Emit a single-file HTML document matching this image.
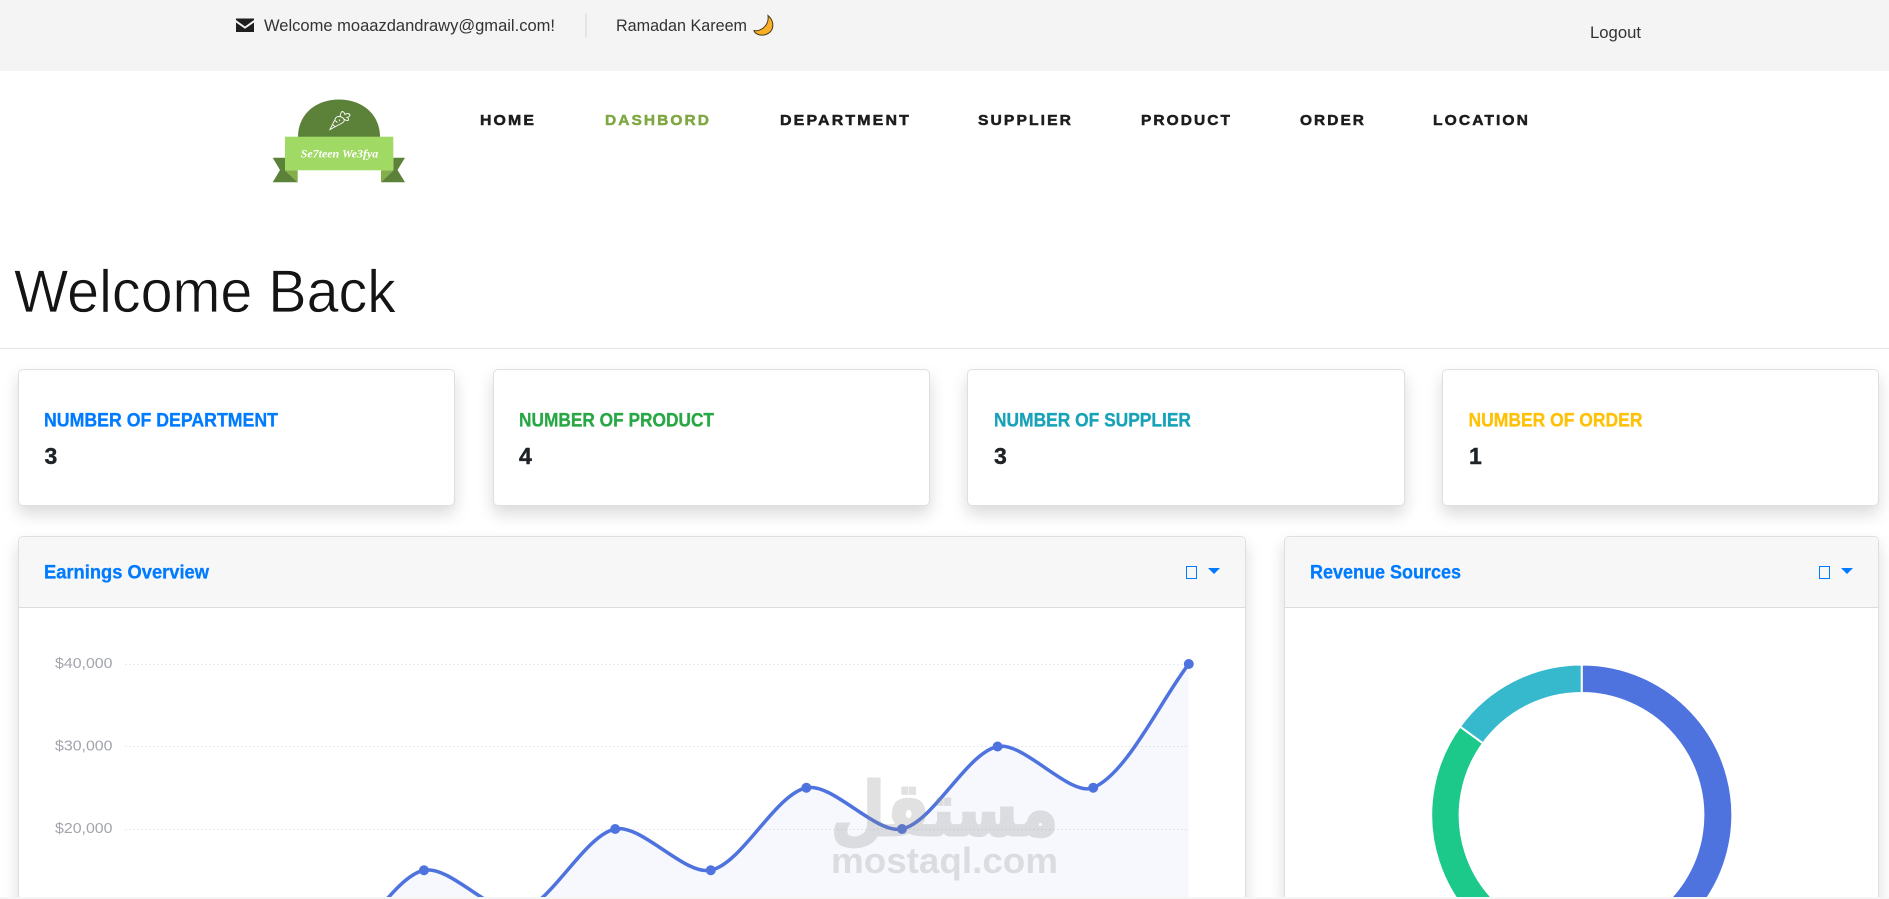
<!DOCTYPE html>
<html lang="en"><head><meta charset="utf-8"><title>Dashboard</title>
<style>
html,body{margin:0;padding:0;background:#fff;width:1889px;height:899px;overflow:hidden}
#w{position:relative;width:1889px;height:899px;overflow:hidden;font-family:"Liberation Sans",sans-serif;background:#fff}
.top{position:absolute;left:0;top:0;width:1889px;height:71px;background:#f4f4f4}
.hr{position:absolute;left:0;top:348px;width:1889px;height:1px;background:#e6e6e6}
.c{position:absolute;box-sizing:border-box;background:#fff;border:1px solid #dfdfdf;border-radius:5px;box-shadow:0 8px 16px rgba(0,0,0,.15)}
.s{top:369px;height:137px;width:437px}
.p{top:536px;height:363px;border-bottom:0;border-radius:5px 5px 0 0}
.h{position:absolute;left:0;right:0;top:0;height:71px;background:#f7f7f7;border-bottom:1px solid #dcdcdc;border-radius:4px 4px 0 0;box-sizing:border-box}
.b{position:absolute;left:0;top:897px;width:1889px;height:2px;background:#f5f5f5;z-index:3}
svg{position:absolute;left:0;top:0;z-index:2}
text{font-family:"Liberation Sans",sans-serif}
.n{font-size:15px;font-weight:700;fill:#1c1c1c;stroke:#1c1c1c;stroke-width:.5px;letter-spacing:2px}
.t{font-size:19px;font-weight:700;stroke-width:.3px}
.v{font-size:23px;font-weight:700;fill:#1f2226;stroke:#1f2226;stroke-width:.4px}
.l{font-size:14.5px;fill:#a3a5ad}
</style></head><body>
<div id="w">
<div class="top"></div>
<div class="hr"></div>
<div class="c s" style="left:18px"></div>
<div class="c s" style="left:493px"></div>
<div class="c s" style="width:438px;left:967px"></div>
<div class="c s" style="left:1442px"></div>
<div class="c p" style="left:18px;width:1228px"><div class="h"></div></div>
<div class="c p" style="left:1284px;width:595px"><div class="h"></div></div>
<div class="b"></div>
<svg width="1889" height="899" viewBox="0 0 1889 899">
<defs><clipPath id="k"><rect x="0" y="0" width="1889" height="897"/></clipPath></defs>
<!-- top bar -->
<path d="M236 18.500h18v1.500l-9 6.500-9-6.500z" fill="#1f1f1f"/>
<path d="M236 22.500l9 6.300 9-6.300v9.500h-18z" fill="#1f1f1f"/>
<text x="264" y="31" font-size="17" fill="#333" textLength="291" lengthAdjust="spacingAndGlyphs">Welcome moaazdandrawy@gmail.com!</text>
<rect x="585.500" y="13" width="1" height="25" fill="#d6d6d6"/>
<text x="616" y="31" font-size="17" fill="#333" textLength="131" lengthAdjust="spacingAndGlyphs">Ramadan Kareem</text>
<path d="M768 15.500C774.500 21 775 31 766 34.500C760 36.500 754.500 33.500 754 30.500C760 32 769.500 26 768 15.500Z" fill="#f9b027" stroke="#4a3a1c" stroke-width="1"/>
<text x="1590" y="38" font-size="17" fill="#333" textLength="51" lengthAdjust="spacingAndGlyphs">Logout</text>
<!-- logo -->
<path d="M298 137C298 114 316 99.500 339 99.500C362 99.500 380 114 380 137Z" fill="#5c8139"/>
<path d="M272.700 157.700H285V170.300L297.700 182.300H272.700L280 170Z" fill="#5c8139"/>
<path d="M405 157.700H393.300V170.300L381 182.300H405L397.500 170Z" fill="#5c8139"/>
<path d="M285 170.300L297.700 182.300V170.300Z" fill="#83ae48"/>
<path d="M393.300 170.300L381 182.300V170.300Z" fill="#83ae48"/>
<rect x="285" y="136.700" width="108.300" height="33.600" fill="#a0d964"/>
<text x="300.700" y="157.300" font-size="12" font-style="italic" font-weight="700" fill="#fff" textLength="77.600" lengthAdjust="spacingAndGlyphs" style="font-family:'Liberation Serif',serif">Se7teen We3fya</text>
<g fill="none" stroke="#fff" stroke-width=".9">
<path d="M330 129.500L336 117.500Q339 115 343 118Q345.500 120.500 343 122.500Z"/>
<path d="M340 116.500C340.500 114 341 112 342 111.500C343.500 111.500 344.500 113 345 114.500C347 113 349.500 113.500 350 115C350 116.500 348.500 117 347 117.500C348.500 118 349 119.500 348 120.500C346.500 120.800 345 120 344 119"/>
<path d="M335 120.500l2.500 2M333 125l2 1.500M339 119.500l1 1.500"/>
</g>
<!-- nav -->
<text class="n" x="480" y="125" textLength="56" lengthAdjust="spacingAndGlyphs">HOME</text>
<text class="n" x="605" y="125" textLength="106" lengthAdjust="spacingAndGlyphs" style="fill:#7fa843;stroke:#7fa843">DASHBORD</text>
<text class="n" x="780" y="125" textLength="131" lengthAdjust="spacingAndGlyphs">DEPARTMENT</text>
<text class="n" x="978" y="125" textLength="95" lengthAdjust="spacingAndGlyphs">SUPPLIER</text>
<text class="n" x="1141" y="125" textLength="91" lengthAdjust="spacingAndGlyphs">PRODUCT</text>
<text class="n" x="1300" y="125" textLength="66" lengthAdjust="spacingAndGlyphs">ORDER</text>
<text class="n" x="1433" y="125" textLength="97" lengthAdjust="spacingAndGlyphs">LOCATION</text>
<!-- heading -->
<text x="14" y="312" font-size="60" fill="#141414" stroke="#fff" stroke-width=".7" textLength="382" lengthAdjust="spacingAndGlyphs">Welcome Back</text>
<!-- stat cards -->
<text class="t" x="44" y="426.500" fill="#007bff" stroke="#007bff" textLength="234" lengthAdjust="spacingAndGlyphs">NUMBER OF DEPARTMENT</text>
<text class="v" x="44.500" y="464">3</text>
<text class="t" x="519" y="426.500" fill="#28a745" stroke="#28a745" textLength="195" lengthAdjust="spacingAndGlyphs">NUMBER OF PRODUCT</text>
<text class="v" x="519" y="464">4</text>
<text class="t" x="994" y="426.500" fill="#17a2b8" stroke="#17a2b8" textLength="197" lengthAdjust="spacingAndGlyphs">NUMBER OF SUPPLIER</text>
<text class="v" x="994" y="464">3</text>
<text class="t" x="1468.500" y="426.500" fill="#ffc107" stroke="#ffc107" textLength="174" lengthAdjust="spacingAndGlyphs">NUMBER OF ORDER</text>
<text class="v" x="1469" y="464">1</text>
<!-- panel headers -->
<text class="t" x="44" y="578.500" fill="#007bff" stroke="#007bff" textLength="165" lengthAdjust="spacingAndGlyphs">Earnings Overview</text>
<text class="t" x="1310" y="578.500" fill="#007bff" stroke="#007bff" textLength="151" lengthAdjust="spacingAndGlyphs">Revenue Sources</text>
<rect x="1186.500" y="566.500" width="10" height="12" fill="none" stroke="#007bff" stroke-width="1"/>
<path d="M1208 568H1220L1214 574Z" fill="#007bff"/>
<rect x="1819.500" y="566.500" width="10" height="12" fill="none" stroke="#007bff" stroke-width="1"/>
<path d="M1841 568H1853L1847 574Z" fill="#007bff"/>
<!-- chart grid -->
<g stroke="#e9eaf0" stroke-width="1" stroke-dasharray="2 2">
<path d="M125 664.500H1189M125 746.500H1189M125 829.500H1189"/>
</g>
<text class="l" x="55" y="668" textLength="57.500" lengthAdjust="spacingAndGlyphs">$40,000</text>
<text class="l" x="55" y="750.500" textLength="57.500" lengthAdjust="spacingAndGlyphs">$30,000</text>
<text class="l" x="55" y="833" textLength="57.500" lengthAdjust="spacingAndGlyphs">$20,000</text>
<g clip-path="url(#k)">
<!-- area and line -->
<path d="M328.400 952.750C359.830 945.970 392.570 877.030 424 870.250C449.930 864.660 493.670 917.090 519.600 911.500C551.030 904.720 583.770 835.780 615.200 829C641.130 823.410 684.870 875.840 710.800 870.250C742.230 863.470 774.970 794.530 806.400 787.750C832.330 782.160 876.070 834.590 902 829C933.430 822.220 966.170 753.280 997.600 746.500C1023.530 740.910 1070.280 797.640 1093.200 787.750C1127.640 772.890 1160.100 701.100 1188.800 664V960H328.400Z" fill="#4e73df" fill-opacity=".05"/>
<path d="M328.400 952.750C359.830 945.970 392.570 877.030 424 870.250C449.930 864.660 493.670 917.090 519.600 911.500C551.030 904.720 583.770 835.780 615.200 829C641.130 823.410 684.870 875.840 710.800 870.250C742.230 863.470 774.970 794.530 806.400 787.750C832.330 782.160 876.070 834.590 902 829C933.430 822.220 966.170 753.280 997.600 746.500C1023.530 740.910 1070.280 797.640 1093.200 787.750C1127.640 772.890 1160.100 701.100 1188.800 664" fill="none" stroke="#4e73df" stroke-width="3.500"/>
<!-- donut -->
<g stroke="#fff" stroke-width="2">
<path d="M1581.700 664.500A150.500 150.500 0 1 1 1535.200 958.100L1544 931.130A122 122 0 1 0 1581.700 693Z" fill="#4e73df"/>
<path d="M1535.200 958.100A150.500 150.500 0 0 1 1460 726.500L1483 743.300A122 122 0 0 0 1544 931.130Z" fill="#1cc88a"/>
<path d="M1460 726.500A150.500 150.500 0 0 1 1581.700 664.500L1581.700 693A122 122 0 0 0 1483 743.300Z" fill="#36b9cc"/>
</g>
</g>
<g fill="#4e73df">
<circle cx="424" cy="870.250" r="5"/><circle cx="615.200" cy="829" r="5"/><circle cx="710.800" cy="870.250" r="5"/><circle cx="806.400" cy="787.750" r="5"/><circle cx="902" cy="829" r="5"/><circle cx="997.600" cy="746.500" r="5"/><circle cx="1093.200" cy="787.750" r="5"/><circle cx="1188.800" cy="664" r="5"/>
</g>
<!-- watermark -->
<g opacity=".25" fill="#8a8a8a">
<text x="831" y="835" font-size="74" font-weight="700" stroke="#8a8a8a" stroke-width="3" textLength="227" lengthAdjust="spacingAndGlyphs" style="font-family:'DejaVu Sans',sans-serif" direction="rtl" text-anchor="end">مستقل</text>
<text x="831" y="873" font-size="36" font-weight="700" textLength="227" lengthAdjust="spacingAndGlyphs">mostaql.com</text>
</g>
</svg>
</div>
</body></html>
